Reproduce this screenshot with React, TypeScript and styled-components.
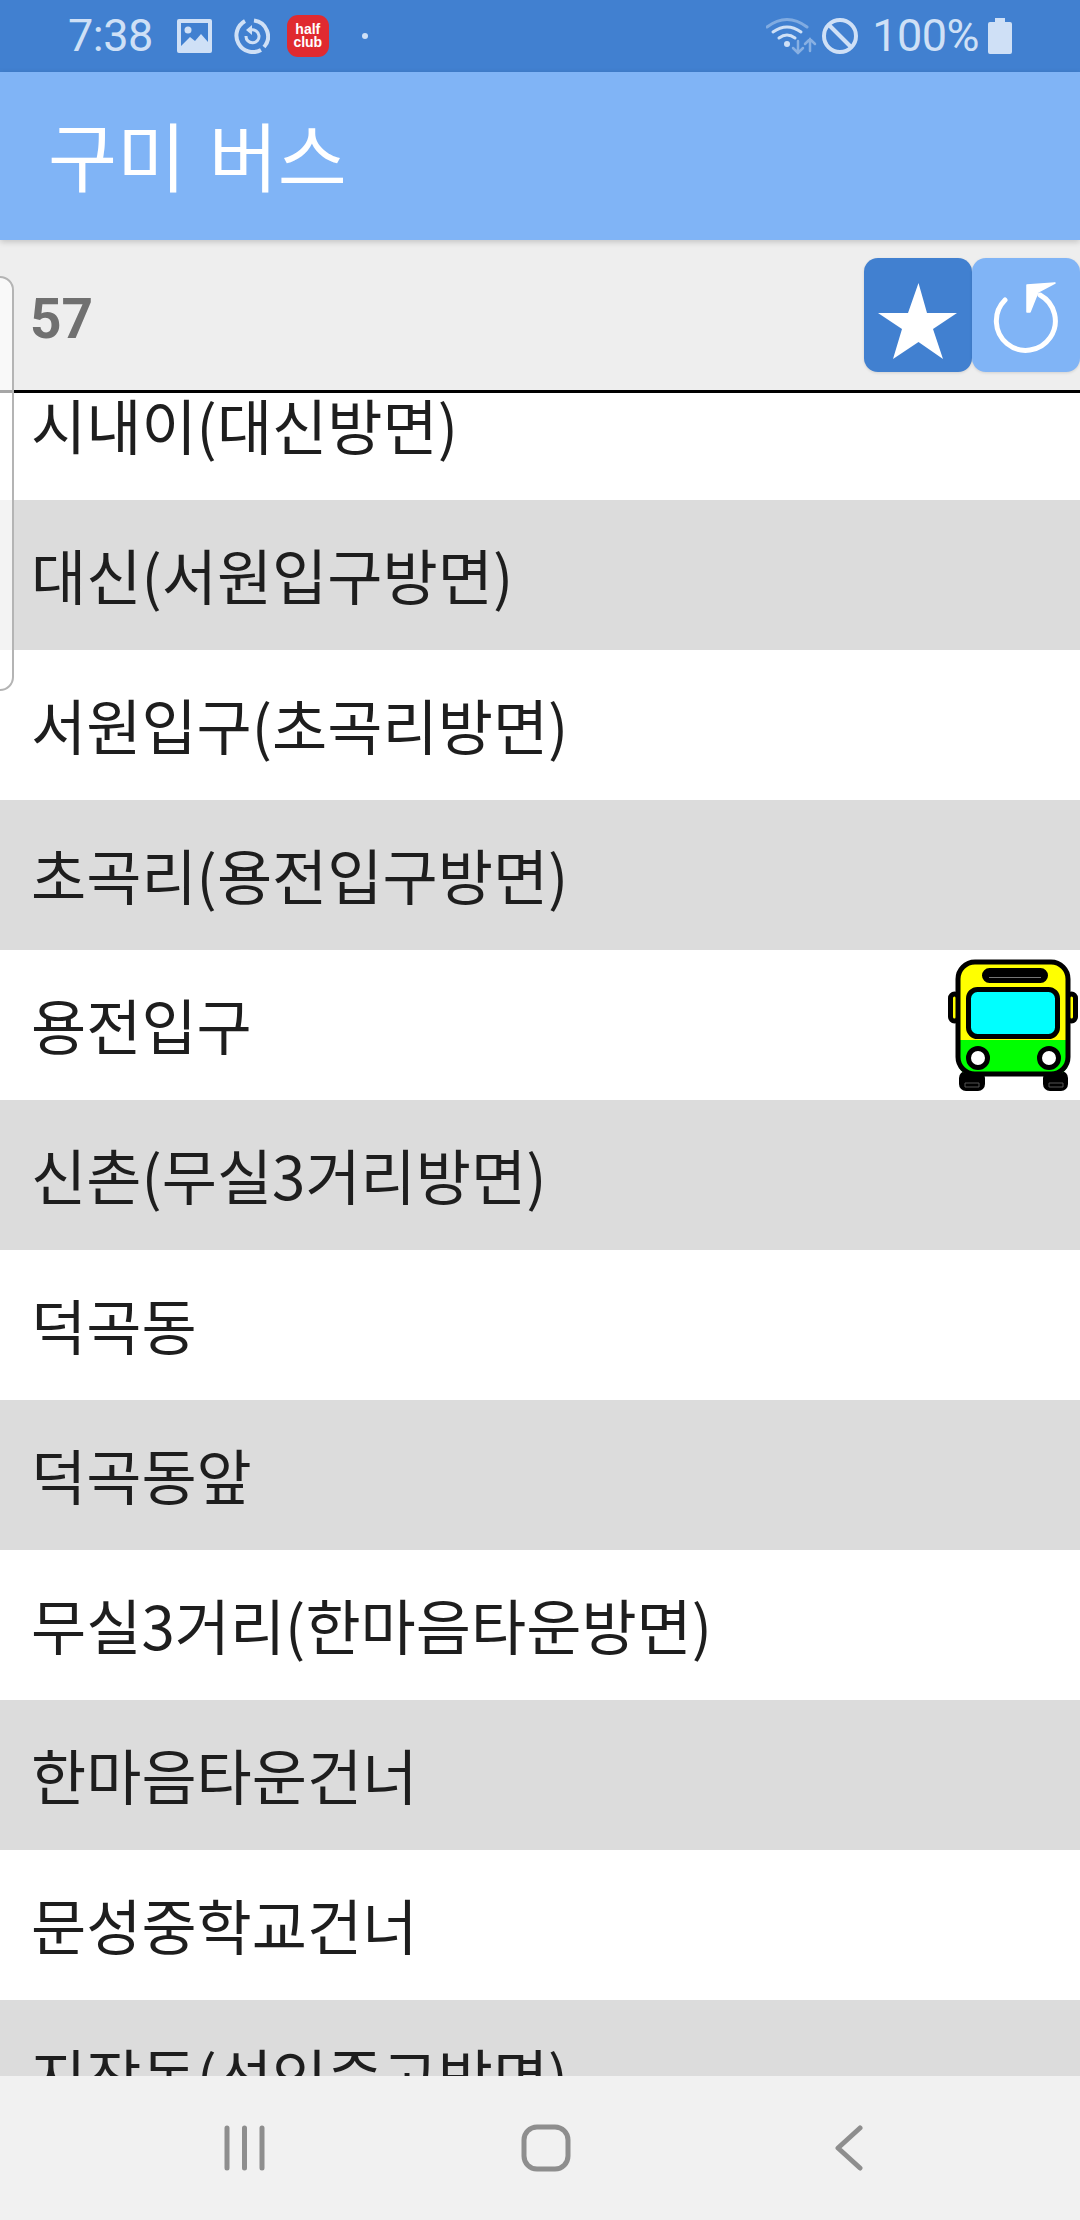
import React from "react";
import styled, { createGlobalStyle } from "styled-components";

const GlobalStyle = createGlobalStyle`
  html, body {
    margin: 0;
    padding: 0;
    background: #fff;
  }
  * {
    box-sizing: border-box;
  }
`;

const Screen = styled.div`
  position: relative;
  width: 1080px;
  height: 2220px;
  display: flex;
  flex-direction: column;
  overflow: hidden;
  font-family: "Noto Sans CJK KR", "Noto Sans", sans-serif;
`;

const StatusBar = styled.div`
  height: 72px;
  flex: none;
  display: flex;
  align-items: center;
  padding-left: 68px;
  background: #4180d0;
  color: #cfe0f6;
  font-family: Roboto, sans-serif;
  font-size: 45px;
`;

const StatusText = styled.span`
  line-height: 72px;
  letter-spacing: -0.5px;
`;

const StatusLeft = styled.div`
  display: flex;
  align-items: center;
  gap: 21px;
  margin-left: 24px;
`;

const HalfClub = styled.div`
  width: 42px;
  height: 42px;
  display: flex;
  flex-direction: column;
  align-items: center;
  justify-content: center;
  border-radius: 11px;
  background: #e02a30;
  color: #fff;
  font-family: "Liberation Sans", sans-serif;
  font-size: 14px;
  line-height: 13px;
  font-weight: 700;
  margin-left: -4px;
`;

const Dot = styled.div`
  width: 6px;
  height: 6px;
  border-radius: 50%;
  background: #cfe0f6;
  margin-left: 12px;
`;

const StatusRight = styled.div`
  margin-left: auto;
  display: flex;
  align-items: center;
  padding-right: 68px;
`;

const PercentText = styled(StatusText)`
  margin-left: 13px;
`;

const BlockIcon = styled.svg`
  margin-left: 3px;
`;

const BatteryIcon = styled.svg`
  margin-left: 9px;
`;

const AppBar = styled.header`
  position: relative;
  z-index: 2;
  height: 168px;
  flex: none;
  display: flex;
  align-items: center;
  padding: 0 0 6px 48px;
  background: #80b4f6;
  color: #fff;
  font-size: 75px;
  word-spacing: 6px;
  box-shadow: 0 2px 6px rgba(0, 0, 0, 0.18);
`;

const Toolbar = styled.div`
  height: 153px;
  flex: none;
  display: flex;
  align-items: flex-start;
  padding-top: 18px;
  background: #eeeeee;
  border-bottom: 3px solid #000;
`;

const RouteNumber = styled.div`
  flex: 1;
  padding: 21px 0 0 30px;
  color: #707070;
  font-family: Roboto, sans-serif;
  font-size: 55px;
  font-weight: 700;
  line-height: 80px;
`;

const ToolButton = styled.button<{ $primary?: boolean }>`
  width: 108px;
  height: 114px;
  padding: 0;
  display: block;
  border: 0;
  border-radius: 14px;
  background: ${(p) => (p.$primary ? "#4180d0" : "#80b4f6")};
  box-shadow: 0 1px 3px rgba(0, 0, 0, 0.12);
`;

const StopList = styled.div`
  flex: 1;
  min-height: 0;
  overflow: hidden;
`;

const StopInner = styled.div`
  margin-top: -43px;
`;

const StopRow = styled.div<{ $shaded: boolean }>`
  height: 150px;
  display: flex;
  align-items: center;
  justify-content: space-between;
  padding-left: 31px;
  background: ${(p) => (p.$shaded ? "#dcdcdc" : "#fff")};
  color: #1e1e1e;
  font-size: 60px;
  white-space: nowrap;
`;

const StopName = styled.span`
  margin-bottom: 4px;
`;

const BusMark = styled.svg`
  width: 132px;
  height: 133px;
  flex: none;
`;

const SideTab = styled.div`
  position: absolute;
  left: -20px;
  top: 276px;
  width: 34px;
  height: 415px;
  border: 2px solid #b4b4b4;
  border-radius: 0 14px 14px 0;
  background: rgba(255, 255, 255, 0.65);
  z-index: 3;
`;

const NavBar = styled.nav`
  height: 144px;
  flex: none;
  display: flex;
  align-items: center;
  background: #f1f1f1;
  padding-left: 224px;
`;

const NavIcon = styled.svg<{ $gap: number }>`
  flex: none;
  margin-right: ${(p) => p.$gap}px;
  fill: none;
  stroke: #8e8e8e;
  stroke-linecap: round;
  stroke-linejoin: round;
`;

const STOPS = [
  "시내이(대신방면)",
  "대신(서원입구방면)",
  "서원입구(초곡리방면)",
  "초곡리(용전입구방면)",
  "용전입구",
  "신촌(무실3거리방면)",
  "덕곡동",
  "덕곡동앞",
  "무실3거리(한마음타운방면)",
  "한마음타운건너",
  "문성중학교건너",
  "지장동(선인중고방면)",
];

const BusIcon = () => (
  <BusMark viewBox="0 0 132 133">
    <rect x="11" y="112" width="26" height="20" rx="7" fill="#000" />
    <rect x="95" y="112" width="25" height="20" rx="7" fill="#000" />
    <path d="M17 124 H31 V128 H17 Z M101 124 H115 V128 H101 Z" fill="none" stroke="#555" strokeWidth="1" />
    <rect x="2.5" y="35" width="8" height="27" rx="4" fill="#ff0" stroke="#000" strokeWidth="5" />
    <rect x="119.5" y="35" width="8" height="27" rx="4" fill="#ff0" stroke="#000" strokeWidth="5" />
    <path d="M10 81 V20 Q10 3 27 3 H103 Q120 3 120 20 V81 Z" fill="#ff0" />
    <path d="M10 81 H120 V102 Q120 115 107 115 H23 Q10 115 10 102 Z" fill="#0f0" />
    <rect x="10" y="3" width="110" height="112" rx="17" fill="none" stroke="#000" strokeWidth="5" />
    <rect x="35" y="10" width="64" height="13" rx="6.5" fill="#000" stroke="#000" strokeWidth="2" />
    <path d="M41 18.5 H93" stroke="#777" strokeWidth="1" />
    <rect x="20.5" y="30.5" width="89" height="47" rx="9" fill="#0ff" stroke="#000" strokeWidth="5" />
    <circle cx="30" cy="99" r="9.5" fill="#fff" stroke="#000" strokeWidth="5" />
    <circle cx="101" cy="99" r="9.5" fill="#fff" stroke="#000" strokeWidth="5" />
  </BusMark>
);

export default function App() {
  return (
    <Screen>
      <GlobalStyle />
      <StatusBar>
        <StatusText>7:38</StatusText>
        <StatusLeft>
          <svg width="35" height="34" viewBox="0 0 35 34">
            <rect width="35" height="34" rx="2" fill="#cfe0f6" />
            <rect x="4" y="4" width="27" height="23" fill="#4180d0" />
            <circle cx="11" cy="11" r="3.5" fill="#cfe0f6" />
            <path d="M4 27 L13 18 L18 22 L24 15 L31 23 V27 Z" fill="#cfe0f6" />
          </svg>
          <svg width="37" height="36" viewBox="0 0 37 36" fill="none" stroke="#cfe0f6">
            <path d="M21 2.5 A16 16 0 0 1 31 29" strokeWidth="4" />
            <path d="M28 32 A16 16 0 0 1 12 3" strokeWidth="4" />
            <path d="M13 18 A6.5 6.5 0 1 0 18 12" strokeWidth="3" />
            <path d="M19 7 L13 12 L19 17 Z" fill="#cfe0f6" stroke="none" />
          </svg>
          <HalfClub>
            <span>half</span>
            <span>club</span>
          </HalfClub>
          <Dot />
        </StatusLeft>
        <StatusRight>
          <svg width="52" height="38" viewBox="0 0 52 38" fill="none" stroke="#cfe0f6" strokeLinecap="round">
            <path d="M1 10 Q21 -5 41 10" strokeWidth="3" opacity="0.45" />
            <path d="M7 15 Q21 5 35 15" strokeWidth="3" />
            <path d="M13 21 Q21 15 29 21" strokeWidth="3" />
            <circle cx="21" cy="27" r="3" fill="#cfe0f6" stroke="none" />
            <path d="M32 24 V36 M27 31 L32 36 L37 31" strokeWidth="2.5" opacity="0.5" />
            <path d="M44 34 V22 M39 27 L44 22 L49 27" strokeWidth="2.5" opacity="0.5" />
          </svg>
          <BlockIcon width="38" height="36" viewBox="0 0 38 36" fill="none" stroke="#cfe0f6" strokeWidth="4">
            <circle cx="19" cy="18" r="16" />
            <path d="M8 7 L30 29" />
          </BlockIcon>
          <PercentText>100%</PercentText>
          <BatteryIcon width="24" height="36" viewBox="0 0 24 36">
            <path d="M7 0 H17 V4 H22 Q24 4 24 6 V34 Q24 36 22 36 H2 Q0 36 0 34 V6 Q0 4 2 4 H7 Z" fill="#cfe0f6" />
          </BatteryIcon>
        </StatusRight>
      </StatusBar>

      <AppBar>구미 버스</AppBar>

      <Toolbar>
        <RouteNumber>57</RouteNumber>
        <ToolButton $primary>
          <svg width="108" height="114" viewBox="0 0 108 114">
            <path d="M54.5 25 L63 55 L93 55 L69 71 L79 101 L54.5 84 L29 101 L38 71 L14 55 L44 55 Z" fill="#fff" />
          </svg>
        </ToolButton>
        <ToolButton>
          <svg width="108" height="114" viewBox="0 0 108 114" fill="none">
            <path d="M33 42 A29.5 29.5 0 1 0 68 37" stroke="#fff" strokeWidth="5" strokeLinecap="round" />
            <path d="M55 27 L83 25 L66 34 L58 54 L55 54 Z" fill="#fff" stroke="#fff" strokeWidth="1.5" strokeLinejoin="round" />
          </svg>
        </ToolButton>
      </Toolbar>

      <SideTab />

      <StopList>
        <StopInner>
          {STOPS.map((stop, i) => (
            <StopRow key={stop} $shaded={i % 2 === 1}>
              <StopName>{stop}</StopName>
              {stop === "용전입구" && <BusIcon />}
            </StopRow>
          ))}
        </StopInner>
      </StopList>

      <NavBar>
        <NavIcon $gap={256} width="41" height="46" viewBox="0 0 41 46" strokeWidth="5">
          <path d="M3 3 V43 M20.5 3 V43 M38 3 V43" />
        </NavIcon>
        <NavIcon $gap={264} width="50" height="48" viewBox="0 0 50 48" strokeWidth="5">
          <rect x="3" y="3" width="44" height="42" rx="13" />
        </NavIcon>
        <NavIcon $gap={0} width="28" height="46" viewBox="0 0 28 46" strokeWidth="5">
          <path d="M25 3 L3 23 L25 43" />
        </NavIcon>
      </NavBar>
    </Screen>
  );
}
